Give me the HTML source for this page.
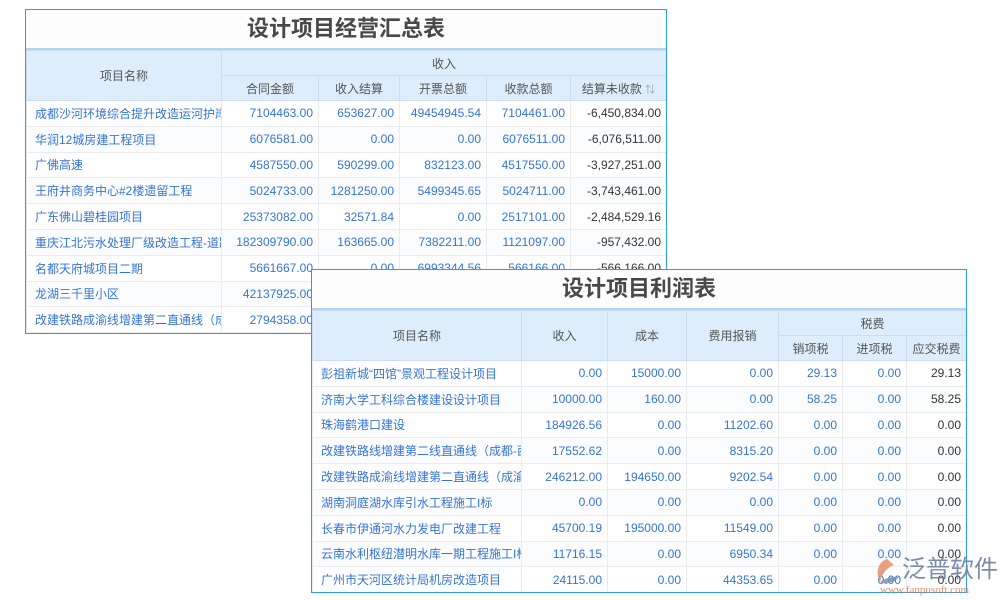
<!DOCTYPE html>
<html><head><meta charset="utf-8"><style>
body{margin:0;width:1000px;height:600px;background:#fff;position:relative;overflow:hidden;font-family:"Liberation Sans","Noto Sans CJK SC",sans-serif;}
.box{position:absolute;border:1px solid #2a9fe0;background:#fff;overflow:hidden;box-sizing:border-box;}
.title{height:40px;line-height:38px;text-align:center;font-size:22px;font-weight:bold;color:#484848;background:#fdfdfd;border-bottom:2px solid #b7d3ec;box-sizing:border-box;}
table{border-collapse:collapse;table-layout:fixed;font-size:12px;}
th{background:#deedfb;color:#555;font-weight:normal;border:1px solid #c9def2;height:24px;padding:0;}
td{height:24.8px;border:1px solid #e8ecef;padding:0 5px;color:#3574d6;text-align:right;white-space:nowrap;overflow:hidden;}
td.n{text-align:left;padding-left:8px;}
td.d{color:#333;}
tr:nth-child(even) td{background:#fbfcfd;}
</style></head><body>

<div class="box" style="left:25px;top:9px;width:642px;height:325px;">
<div class="title">设计项目经营汇总表</div>
<table style="width:640px">
<colgroup><col style="width:195px"><col style="width:97px"><col style="width:81px"><col style="width:87px"><col style="width:84px"><col style="width:96px"></colgroup>
<thead>
<tr><th rowspan="2">项目名称</th><th colspan="5">收入</th></tr>
<tr><th>合同金额</th><th>收入结算</th><th>开票总额</th><th>收款总额</th><th>结算未收款 <span style="color:#8aa;font-size:10px">⇅</span></th></tr>
</thead>
<tbody>
<tr><td class="n">成都沙河环境综合提升改造运河护岸</td><td>7104463.00</td><td>653627.00</td><td>49454945.54</td><td>7104461.00</td><td class="d">-6,450,834.00</td></tr>
<tr><td class="n">华润12城房建工程项目</td><td>6076581.00</td><td>0.00</td><td>0.00</td><td>6076511.00</td><td class="d">-6,076,511.00</td></tr>
<tr><td class="n">广佛高速</td><td>4587550.00</td><td>590299.00</td><td>832123.00</td><td>4517550.00</td><td class="d">-3,927,251.00</td></tr>
<tr><td class="n">王府井商务中心#2楼遗留工程</td><td>5024733.00</td><td>1281250.00</td><td>5499345.65</td><td>5024711.00</td><td class="d">-3,743,461.00</td></tr>
<tr><td class="n">广东佛山碧桂园项目</td><td>25373082.00</td><td>32571.84</td><td>0.00</td><td>2517101.00</td><td class="d">-2,484,529.16</td></tr>
<tr><td class="n">重庆江北污水处理厂级改造工程-道路</td><td>182309790.00</td><td>163665.00</td><td>7382211.00</td><td>1121097.00</td><td class="d">-957,432.00</td></tr>
<tr><td class="n">名都天府城项目二期</td><td>5661667.00</td><td>0.00</td><td>6993344.56</td><td>566166.00</td><td class="d">-566,166.00</td></tr>
<tr><td class="n">龙湖三千里小区</td><td>42137925.00</td><td>0.00</td><td>0.00</td><td>0.00</td><td class="d">0.00</td></tr>
<tr><td class="n">改建铁路成渝线增建第二直通线（成</td><td>2794358.00</td><td>0.00</td><td>0.00</td><td>0.00</td><td class="d">0.00</td></tr>
</tbody></table>
</div>

<div class="box" style="left:311px;top:269px;width:656px;height:324px;">
<div class="title">设计项目利润表</div>
<table style="width:654px">
<colgroup><col style="width:209px"><col style="width:86px"><col style="width:79px"><col style="width:92px"><col style="width:64px"><col style="width:64px"><col style="width:60px"></colgroup>
<thead>
<tr><th rowspan="2">项目名称</th><th rowspan="2">收入</th><th rowspan="2">成本</th><th rowspan="2">费用报销</th><th colspan="3">税费</th></tr>
<tr><th>销项税</th><th>进项税</th><th>应交税费</th></tr>
</thead>
<tbody>
<tr><td class="n">彭祖新城“四馆”景观工程设计项目</td><td>0.00</td><td>15000.00</td><td>0.00</td><td>29.13</td><td>0.00</td><td class="d">29.13</td></tr>
<tr><td class="n">济南大学工科综合楼建设设计项目</td><td>10000.00</td><td>160.00</td><td>0.00</td><td>58.25</td><td>0.00</td><td class="d">58.25</td></tr>
<tr><td class="n">珠海鹤港口建设</td><td>184926.56</td><td>0.00</td><td>11202.60</td><td>0.00</td><td>0.00</td><td class="d">0.00</td></tr>
<tr><td class="n">改建铁路线增建第二线直通线（成都-西</td><td>17552.62</td><td>0.00</td><td>8315.20</td><td>0.00</td><td>0.00</td><td class="d">0.00</td></tr>
<tr><td class="n">改建铁路成渝线增建第二直通线（成渝</td><td>246212.00</td><td>194650.00</td><td>9202.54</td><td>0.00</td><td>0.00</td><td class="d">0.00</td></tr>
<tr><td class="n">湖南洞庭湖水库引水工程施工I标</td><td>0.00</td><td>0.00</td><td>0.00</td><td>0.00</td><td>0.00</td><td class="d">0.00</td></tr>
<tr><td class="n">长春市伊通河水力发电厂改建工程</td><td>45700.19</td><td>195000.00</td><td>11549.00</td><td>0.00</td><td>0.00</td><td class="d">0.00</td></tr>
<tr><td class="n">云南水利枢纽潜明水库一期工程施工I标</td><td>11716.15</td><td>0.00</td><td>6950.34</td><td>0.00</td><td>0.00</td><td class="d">0.00</td></tr>
<tr><td class="n">广州市天河区统计局机房改造项目</td><td>24115.00</td><td>0.00</td><td>44353.65</td><td>0.00</td><td>0.00</td><td class="d">0.00</td></tr>
</tbody></table>
</div>

<div style="position:absolute;left:870px;top:553px;width:130px;height:45px;white-space:nowrap;">
<svg width="30" height="30" style="position:absolute;left:2px;top:3px" viewBox="0 0 30 30"><path d="M15 3 C6 6 3 16 8 26 C10 18 14 12 22 9 Z" fill="#e0906a" opacity="0.85"/><path d="M8 26 C14 22 20 20 27 21 C22 27 13 29 8 26 Z" fill="#7a8fae" opacity="0.85"/></svg>
<div style="position:absolute;left:32px;top:0px;font-size:24px;line-height:28px;color:#6b7f9e;opacity:0.9;font-family:'Noto Sans CJK SC',sans-serif;">泛普软件</div>
<div style="position:absolute;left:10px;top:31px;font-size:11px;color:#e07a50;font-family:'Liberation Serif',serif;opacity:0.85">www.fanpusoft.com</div>
</div>
</body></html>
